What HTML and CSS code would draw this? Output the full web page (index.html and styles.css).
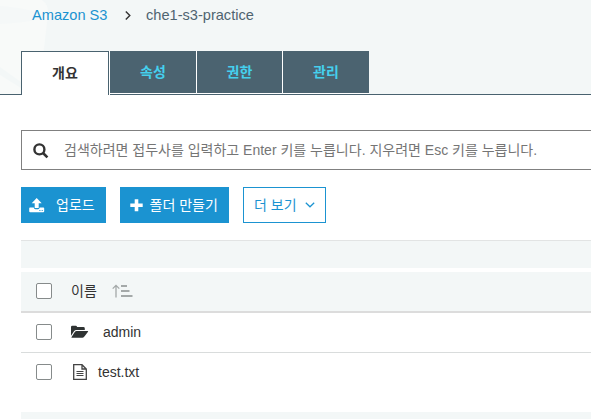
FILE: index.html
```html
<!DOCTYPE html>
<html lang="ko">
<head>
<meta charset="utf-8">
<title>Amazon S3</title>
<link rel="stylesheet" href="styles.css">
</head>
<body>
<header class="header">
  <svg class="bucket" width="50" height="94" viewBox="0 0 50 94" aria-hidden="true">
    <path d="M0 0H42Q49 5 48 14L43 57Q42 80 36 94H0Z" fill="#f8faf9"/>
    <path d="M0 6Q30 8 45 16Q38 22 0 24Z" fill="#f5f8f8"/>
    <path d="M0 67L21 82V88L0 75Z" fill="#f3f7f7"/>
  </svg>
  <nav class="crumbs">
    <a class="crumb-link">Amazon S3</a>
    <svg class="crumb-arrow" width="6" height="9" viewBox="0 0 6 9"><path d="M.8 .6L4.8 4.5L.8 8.4" fill="none" stroke="#333" stroke-width="1.4"/></svg>
    <span class="crumb-current">che1-s3-practice</span>
  </nav>
  <div class="tabs">
    <div class="tab tab-active">개요</div>
    <div class="tab">속성</div>
    <div class="tab tab-narrow">권한</div>
    <div class="tab">관리</div>
  </div>
</header>
<main class="content">
  <div class="search">
    <svg class="search-icon" width="16" height="16" viewBox="0 0 16 16"><circle cx="6.4" cy="6.4" r="5" fill="none" stroke="#333" stroke-width="2.4"/><path d="M10 10L14.4 14.4" stroke="#333" stroke-width="2.6"/></svg>
    <span class="placeholder">검색하려면 접두사를 입력하고 Enter 키를 누릅니다. 지우려면 Esc 키를 누릅니다.</span>
  </div>
  <div class="actions">
    <button class="btn btn-upload">
      <svg width="16" height="15" viewBox="0 0 16 15" fill="#fff"><path d="M7.7 0L12.7 5.2H9.7V10H5.7V5.2H2.7Z"/><path fill-rule="evenodd" d="M1 9.6H4.7Q5 11.2 6.4 11.2H9Q10.4 11.2 10.7 9.6H14.4Q15.2 9.6 15.2 10.5V13.2Q15.2 14.2 14.2 14.2H1.2Q.2 14.2 .2 13.2V10.5Q.2 9.6 1 9.6ZM10.4 12V13H11.4V12ZM12.7 12V13H13.7V12Z"/></svg>
      <span>업로드</span>
    </button>
    <button class="btn btn-folder">
      <svg width="13" height="13" viewBox="0 0 13 13"><path d="M6.5 .3V12.3M.3 6.3H12.7" stroke="#fff" stroke-width="3.6"/></svg>
      <span>폴더 만들기</span>
    </button>
    <button class="btn btn-more">
      <span>더 보기</span>
      <svg width="10" height="6" viewBox="0 0 10 6"><path d="M.8 .7L5 4.8L9.2 .7" fill="none" stroke="#1b93d1" stroke-width="1.2"/></svg>
    </button>
  </div>
  <div class="table">
    <div class="toolbar"></div>
    <div class="row row-head">
      <span class="check"></span>
      <span class="head-label">이름</span>
      <svg class="sort" width="21" height="14" viewBox="0 0 21 14" fill="none" stroke="#a4a9a9"><path d="M4 13.5V1.5M.7 4.6L4 1.3L7.3 4.6" stroke-width="1.3"/><path d="M9 2H15M9 7H17.5M9 12H20.5" stroke-width="2"/></svg>
    </div>
    <div class="row">
      <span class="check"></span>
      <svg class="folder-icon" width="18" height="14" viewBox="0 0 18 14" fill="#2f3333"><path d="M0 10.8V2Q0 .7 1.3 .7H4.8Q6 .7 6 2H12.4Q13.8 2 13.8 3.4V5H5.4Q4 5 3 6.2Z"/><path d="M5.5 6H16.7Q17.6 6 17 6.8L13.8 11Q12.8 12.7 11.5 12.7H.8Q0 12.7 .6 11.9L3.6 7.2Q4.5 6 5.5 6Z"/></svg>
      <span>admin</span>
    </div>
    <div class="row row-file">
      <span class="check"></span>
      <svg class="file-icon" width="14" height="16" viewBox="0 0 14 16" fill="none" stroke="#444"><path d="M.7 .7H9L13.3 5V15.3H.7ZM9 .7V5H13.3" stroke-width="1.3"/><path d="M3.5 7.5H10.5M3.5 9.5H10.5M3.5 11.5H10.5"/></svg>
      <span>test.txt</span>
    </div>
    <div class="table-foot"></div>
  </div>
</main>
</body>
</html>
```
FILE: styles.css
```css
* { box-sizing: border-box; }
body {
  margin: 0;
  height: 419px;
  overflow: hidden;
  background: #fff;
  color: #333;
  font: 14px/20px "Liberation Sans", "Noto Sans CJK KR", sans-serif;
}
svg { display: block; flex: none; }
span, a { white-space: nowrap; }
.header {
  position: relative;
  height: 95px;
  padding: 5px 0 0 21px;
  background: #f3f7f7;
  border-bottom: 1px solid #49626f;
}
.bucket { position: absolute; left: 0; top: 0; }
.crumbs { position: relative; display: flex; align-items: center; height: 20px; padding-left: 11px; font-size: 14.6px; }
.crumb-link { color: #1b93d1; width: 76px; }
.crumb-arrow { margin: 1px 15px 0 17px; }
.crumb-current { color: #4f6470; }
.tabs { position: relative; display: flex; gap: 1px; margin-top: 26px; }
.tab {
  width: 86px;
  height: 42px;
  background: #4b6370;
  color: #45d0ee;
  font-weight: 700;
  line-height: 42px;
  text-align: center;
  box-shadow: 0 1px #fff, 1px 0 #fff;
}
.tab:last-child { box-shadow: 0 1px #fff; }
.tab-narrow { width: 85px; }
.tab-active {
  width: 88px;
  height: 44px;
  background: #fff;
  color: #333;
  border: 1px solid #49626f;
  border-bottom: 0;
}
.content { padding: 35px 0 0 21px; }
.search {
  display: flex;
  align-items: center;
  height: 40px;
  padding-left: 11px;
  border: 1px solid #808080;
  border-right: 0;
}
.search-icon { margin-top: 1px; }
.placeholder { margin-left: 15px; color: #757575; }
.actions { display: flex; gap: 14px; margin-top: 17px; }
.btn {
  display: flex;
  align-items: center;
  height: 36px;
  padding: 0;
  border: 1px solid #1b93d1;
  background: #1b93d1;
  color: #fff;
  font: 14px/20px "Liberation Sans", "Noto Sans CJK KR", sans-serif;
}
.btn-upload { width: 85px; padding-left: 7px; gap: 11px; }
.btn-folder { width: 109px; padding-left: 9px; gap: 6.5px; }
.btn-more { width: 83px; padding-left: 10px; gap: 8px; background: #fff; color: #1b93d1; }
.table { margin-top: 17px; }
.toolbar { height: 28px; margin-bottom: 4px; background: #f3f7f7; border-top: 1px solid #e2e4e4; }
.row { display: flex; align-items: center; height: 40px; padding: 0 0 2px 15px; border-bottom: 1px solid #d9dcdc; }
.row-head { height: 41px; padding-bottom: 1px; background: #f3f7f7; border-bottom: 2px solid #dcdcdc; }
.check { flex: none; width: 16px; height: 16px; border: 1px solid #868b8b; border-radius: 2px; background: #fff; }
.head-label { margin-left: 19px; }
.sort { margin-left: 15px; }
.folder-icon { margin: 0 14px 0 19px; }
.row-file { border-bottom: 0; height: 39px; padding-bottom: 1px; }
.file-icon { margin: 0 11px 0 21px; }
.table-foot { height: 7px; margin-top: 20px; background: #f3f7f7; }
```
